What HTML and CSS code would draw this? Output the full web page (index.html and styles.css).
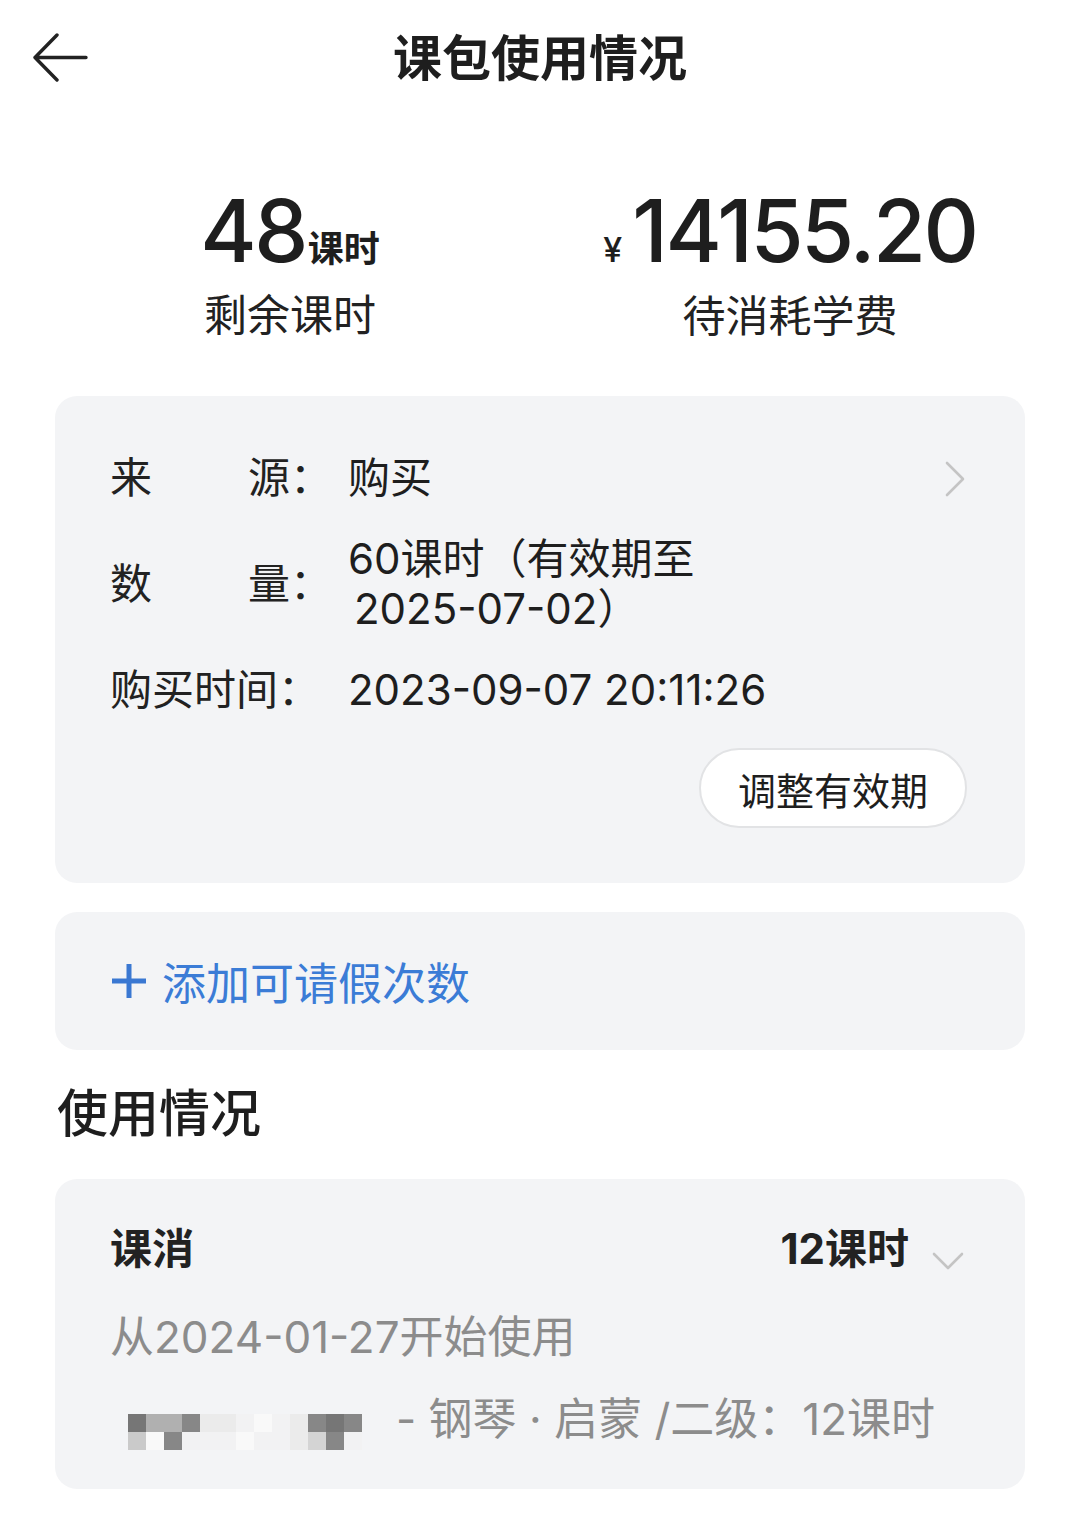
FILE: index.html
```html
<!DOCTYPE html>
<html lang="zh-CN">
<head>
    <meta charset="UTF-8">
    <meta name="viewport" content="width=device-width, initial-scale=1.0">
    <title>课包使用情况</title>
    <link rel="stylesheet" href="styles.css">
</head>
<body>
    <!-- Nav bar -->
    <header class="nav">
        <button class="back-btn" aria-label="返回">
            <svg width="56" height="50" viewBox="0 0 56 50">
                <path d="M53 24.5H3M24 2L2 24.5L24 47" fill="none" stroke="#222" stroke-width="3.4" stroke-linecap="round" stroke-linejoin="round"/>
            </svg>
        </button>
        <h1 class="nav-title">课包使用情况</h1>
        <span></span>
    </header>

    <!-- Summary -->
    <section class="stats">
        <div class="stat">
            <div class="stat-num">48<span class="stat-unit">课时</span></div>
            <div class="stat-label">剩余课时</div>
        </div>
        <div class="stat">
            <div class="stat-num"><span class="stat-yen">¥</span>14155.20</div>
            <div class="stat-label">待消耗学费</div>
        </div>
    </section>

    <!-- Package info -->
    <div class="card info-card">
        <div class="info-row">
            <div class="info-label"><span>来</span><span>源：</span></div>
            <div class="info-value">购买</div>
            <svg class="chev-right" width="24" height="38" viewBox="0 0 24 38">
                <path d="M4 3L20 19L4 35" fill="none" stroke="#c4c4c4" stroke-width="2.6" stroke-linecap="round" stroke-linejoin="round"/>
            </svg>
        </div>
        <div class="info-row">
            <div class="info-label"><span>数</span><span>量：</span></div>
            <div class="info-value">60课时（有效期至<br><span class="indent">2025-07-02）</span></div>
        </div>
        <div class="info-row">
            <div class="info-label"><span>购买时间：</span></div>
            <div class="info-value">2023-09-07 20:11:26</div>
        </div>
        <div class="info-actions">
            <button class="pill-btn">调整有效期</button>
        </div>
    </div>

    <!-- Leave -->
    <div class="card add-card">
        <svg width="38" height="38" viewBox="0 0 38 38">
            <path d="M19 2V36M2 19H36" stroke="#3a78d2" stroke-width="5"/>
        </svg>
        <span class="add-text">添加可请假次数</span>
    </div>

    <h2 class="section-title">使用情况</h2>

    <div class="card usage-card">
        <div class="usage-head">
            <span class="usage-type">课消</span>
            <span class="usage-total">12课时</span>
            <svg class="chev-down" width="34" height="22" viewBox="0 0 34 22">
                <path d="M3 4L17 18L31 4" fill="none" stroke="#c4c4c4" stroke-width="2.6" stroke-linecap="round" stroke-linejoin="round"/>
            </svg>
        </div>
        <div class="usage-date">从2024-01-27开始使用</div>
        <div class="usage-item">
            <div class="mosaic">
                <i class="m1"></i><i class="m3"></i><i class="m3"></i><i class="m2"></i><i class="m6"></i><i class="m6"></i><i class="m7"></i><i class="m8"></i><i class="m7"></i><i class="m6"></i><i class="m2"></i><i class="m1"></i><i class="m2"></i>
                <i class="m4"></i><i class="m8"></i><i class="m2"></i><i class="m7"></i><i class="m7"></i><i class="m7"></i><i class="m8"></i><i class="m7"></i><i class="m7"></i><i class="m6"></i><i class="m5"></i><i class="m2"></i><i class="m7"></i>
            </div>
            <span class="usage-desc">- 钢琴 · 启蒙 /二级：12课时</span>
        </div>
    </div>
</body>
</html>
```

FILE: styles.css
```css
/* General */
body {
    margin: 0;
    padding: 0;
    width: 1080px;
    background: #fff;
    color: #222;
    font-family: "Inter", "Noto Sans CJK SC", sans-serif;
}

/* Nav bar */
.nav {
    height: 116px;
    display: grid;
    grid-template-columns: 1fr auto 1fr;
    align-items: center;
}

.back-btn {
    justify-self: start;
    margin-left: 33px;
    border: none;
    background: transparent;
    padding: 0;
    display: flex;
}

.nav-title {
    margin: -8px 0 0;
    font-size: 49px;
    font-weight: 700;
    color: #1e1e1e;
}

/* Summary */
.stats {
    display: flex;
    padding: 72px 40px 0;
}

.stat {
    flex: 1;
    display: flex;
    flex-direction: column;
    align-items: center;
}

.stat-num {
    font-size: 86px;
    font-weight: 500;
    line-height: 86px;
    color: #1e1e1e;
    letter-spacing: -2.5px;
}

.stat-unit {
    font-size: 36px;
    font-weight: 700;
    margin-left: 2px;
    letter-spacing: 0;
}

.stat-yen {
    font-size: 34px;
    font-weight: 500;
    margin-right: 10px;
    letter-spacing: 0;
}

.stat-label {
    margin-top: -3px;
    font-size: 43px;
    line-height: 52px;
    color: #222;
}

/* Cards */
.card {
    margin: 0 55px;
    background: #f3f4f6;
    border-radius: 22px;
}

.info-card {
    margin-top: 54px;
    padding: 57px 58px 55px 55px;
    display: flex;
    flex-direction: column;
    gap: 31px;
    font-size: 42px;
    line-height: 50px;
}

.info-row {
    display: flex;
    align-items: center;
}

.info-label {
    width: 222px;
    display: flex;
    justify-content: space-between;
    flex-shrink: 0;
}

.info-value {
    margin-left: 16px;
    color: #1e1e1e;
}

.indent {
    padding-left: 6px;
}

.chev-right {
    margin-left: auto;
    margin-top: 2px;
}

.info-actions {
    display: flex;
    justify-content: flex-end;
    margin-top: 2px;
}

.pill-btn {
    width: 268px;
    height: 80px;
    border: 2px solid #e2e3e5;
    border-radius: 40px;
    background: #fff;
    font-family: inherit;
    font-size: 38px;
    color: #1e1e1e;
    padding: 0;
}

.add-card {
    margin-top: 29px;
    height: 138px;
    padding-left: 55px;
    display: flex;
    align-items: center;
    gap: 14px;
}

.add-text {
    font-size: 44px;
    color: #3b7cd6;
}

.section-title {
    margin: 34px 55px 0 57px;
    font-size: 51px;
    line-height: 60px;
    font-weight: 500;
    color: #1e1e1e;
}

.usage-card {
    margin-top: 35px;
    padding: 45px 60px 45px 55px;
    font-size: 42px;
    line-height: 50px;
}

.usage-head {
    display: flex;
    align-items: center;
}

.usage-type {
    font-weight: 700;
    flex: 1;
}

.usage-total {
    font-weight: 700;
}

.chev-down {
    margin-left: 22px;
    margin-top: 24px;
}

.usage-date {
    margin-top: 38px;
    color: #8c8c8c;
    font-size: 44px;
}

.usage-item {
    margin-top: 32px;
    display: flex;
    align-items: flex-end;
}

.mosaic {
    margin-left: 18px;
    display: grid;
    grid-template-columns: repeat(13, 18px);
    grid-template-rows: 18px 18px;
    margin-bottom: -6px;
}

.mosaic i {
    display: block;
}

.m1 { background: #767676; }
.m2 { background: #878787; }
.m3 { background: #b0b0b0; }
.m4 { background: #cacaca; }
.m5 { background: #d4d4d4; }
.m6 { background: #ebebeb; }
.m7 { background: #f2f2f3; }
.m8 { background: #f9f9f9; }

.usage-desc {
    margin-left: 34px;
    color: #8c8c8c;
    font-size: 44px;
}
```
